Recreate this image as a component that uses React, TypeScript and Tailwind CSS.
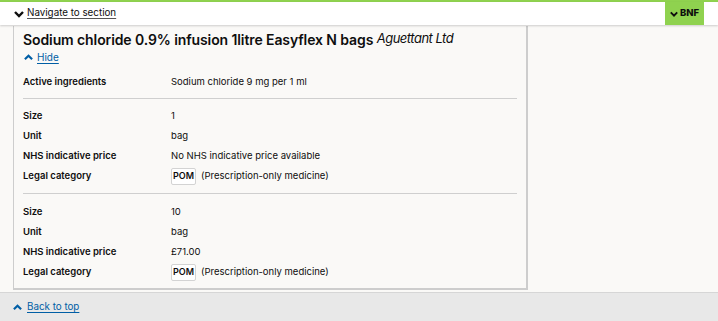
import React from "react";

const Chevron = ({ dir, className }: { dir: "up" | "down"; className?: string }) => (
  <svg viewBox="0 0 10 10" className={className} fill="none" stroke="currentColor" strokeWidth={2.4} strokeLinecap="butt" strokeLinejoin="miter">
    {dir === "down" ? <path d="M1 3 L5 7 L9 3" /> : <path d="M1 7 L5 3 L9 7" />}
  </svg>
);

type Row = { label: string; value: React.ReactNode };

const Pom = () => (
  <span className="flex items-center">
    <span className="inline-flex items-center justify-center h-[17px] w-[25px] bg-white border border-[#d3d3d3] rounded-[2px] text-[9px] font-semibold mr-[5px]">POM</span>
    <span>(Prescription-only medicine)</span>
  </span>
);

const Group = ({ rows, className }: { rows: Row[]; className?: string }) => (
  <div className={className}>
    {rows.map((r, i) => (
      <div key={i} className="flex items-center h-[20px]">
        <div className="w-[148px] font-semibold">{r.label}</div>
        <div>{r.value}</div>
      </div>
    ))}
  </div>
);

export default function App() {
  return (
    <div className="w-[718px] h-[321px] flex flex-col bg-[#faf9f7] text-[#0e0e0e] overflow-hidden" style={{ fontFamily: "Inter, 'Liberation Sans', sans-serif" }}>
      <div className="h-[2px] bg-[#8fd24f]" />
      <div className="relative z-10 h-[23px] bg-white shadow-[0_1px_2px_rgba(0,0,0,0.18)] flex items-center justify-between">
        <div className="flex items-center pl-[14px] text-[9.8px]">
          <Chevron dir="down" className="w-[10px] h-[10px] mr-[3px]" />
          <span className="underline underline-offset-2 decoration-[#555]">Navigate to section</span>
        </div>
        <div className="mr-[14px] h-full w-[39px] bg-[#8fd24f] flex items-center justify-center text-[9.5px] font-extrabold">
          <Chevron dir="down" className="w-[8px] h-[8px] mr-[2px]" />
          <span>BNF</span>
        </div>
      </div>
      <div className="flex-1 pl-[13px] pt-[1px]">
        <div className="w-[515px] border-l border-r-2 border-b-2 border-[#cdcdcd] px-[9px] pt-[3px] pb-[6px] text-[9.5px]">
          <div className="h-[20px] flex items-center text-[14px] font-semibold tracking-[-0.1px]">
            Sodium chloride 0.9% infusion 1litre Easyflex N bags&nbsp;<span className="italic font-normal text-[13px] tracking-[-0.5px]">Aguettant Ltd</span>
          </div>
          <div className="h-[14px] mt-[1px] flex items-center text-[10px] text-[#005ea5]">
            <Chevron dir="up" className="w-[9px] h-[9px] ml-[1px] mr-[4px]" />
            <span className="underline underline-offset-2">Hide</span>
          </div>
          <Group className="pt-[8px] pb-[6px] border-b border-[#cfcfcf]" rows={[{ label: "Active ingredients", value: "Sodium chloride 9 mg per 1 ml" }]} />
          <Group
            className="pt-[7px] pb-[7px] border-b border-[#cfcfcf]"
            rows={[
              { label: "Size", value: "1" },
              { label: "Unit", value: "bag" },
              { label: "NHS indicative price", value: "No NHS indicative price available" },
              { label: "Legal category", value: <Pom /> },
            ]}
          />
          <Group
            className="pt-[8px]"
            rows={[
              { label: "Size", value: "10" },
              { label: "Unit", value: "bag" },
              { label: "NHS indicative price", value: "£71.00" },
              { label: "Legal category", value: <Pom /> },
            ]}
          />
        </div>
      </div>
      <div className="h-[29px] bg-[#e8e8e8] border-t border-[#d6d6d6] flex items-center pl-[13px] text-[9.8px] text-[#005ea5]">
        <Chevron dir="up" className="w-[9px] h-[9px] mr-[5px]" />
        <span className="underline underline-offset-2">Back to top</span>
      </div>
    </div>
  );
}
